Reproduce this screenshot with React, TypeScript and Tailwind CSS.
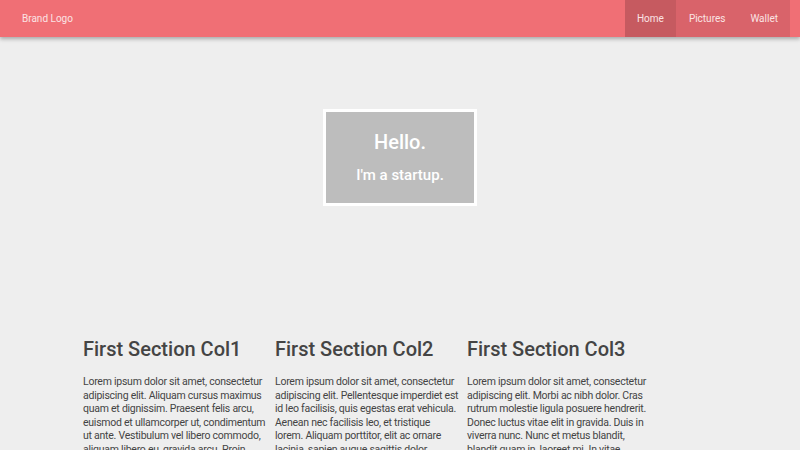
export default function App() {
  const cols = [
    {
      title: 'First Section Col1',
      text: 'Lorem ipsum dolor sit amet, consectetur adipiscing elit. Aliquam cursus maximus quam et dignissim. Praesent felis arcu, euismod et ullamcorper ut, condimentum ut ante. Vestibulum vel libero commodo, aliquam libero eu, gravida arcu. Proin molestie a facilisis, dignissim efficitur nulla.',
    },
    {
      title: 'First Section Col2',
      text: 'Lorem ipsum dolor sit amet, consectetur adipiscing elit. Pellentesque imperdiet est id leo facilisis, quis egestas erat vehicula. Aenean nec facilisis leo, et tristique lorem. Aliquam porttitor, elit ac ornare lacinia, sapien augue sagittis dolor, tempus ultricies lacus non est. Nulla.',
    },
    {
      title: 'First Section Col3',
      text: 'Lorem ipsum dolor sit amet, consectetur adipiscing elit. Morbi ac nibh dolor. Cras rutrum molestie ligula posuere hendrerit. Donec luctus vitae elit in gravida. Duis in viverra nunc. Nunc et metus blandit, blandit quam in, laoreet mi. In vitae maximus sit amet tellus dictum, nec.',
    },
  ];

  return (
    <div className="min-h-screen bg-[#eeeeee] font-['Roboto',sans-serif] overflow-hidden h-[450px]">
      {/* Navbar */}
      <nav className="relative z-10 h-[37px] bg-[#f06f75] flex items-stretch justify-between shadow-[0_2px_4px_rgba(0,0,0,0.3)]">
        <div className="flex items-center pl-[22px] text-[10px] text-[#fbe3e4]">Brand Logo</div>
        <ul className="flex items-stretch mr-[10px] bg-[#d9636a] text-[10px] text-[#fbe3e4]">
          <li className="flex items-center pl-[12px] pr-[12px] bg-[#c65a60]">Home</li>
          <li className="flex items-center px-[13px]">Pictures</li>
          <li className="flex items-center px-[12px]">Wallet</li>
        </ul>
      </nav>

      {/* Hero */}
      <section className="h-[240px] flex items-center justify-center">
        <div className="w-[154px] h-[97px] border-[3px] border-white bg-[#bdbdbd] flex flex-col items-center justify-center text-white">
          <h1 className="text-[20px] leading-[24px] font-medium">Hello.</h1>
          <p className="mt-[12px] text-[15px] leading-[18px] font-medium">I'm a startup.</p>
        </div>
      </section>

      {/* Columns */}
      <section className="pl-[83px] pt-[60px] flex">
        {cols.map((c) => (
          <div key={c.title} className="w-[192px] pr-[7.5px]">
            <h2 className="text-[20px] leading-[24px] font-medium text-[#444444]">{c.title}</h2>
            <p className="mt-[14px] text-[10.5px] leading-[13.5px] tracking-[-0.25px] text-[#444444]">{c.text}</p>
          </div>
        ))}
      </section>
    </div>
  );
}
